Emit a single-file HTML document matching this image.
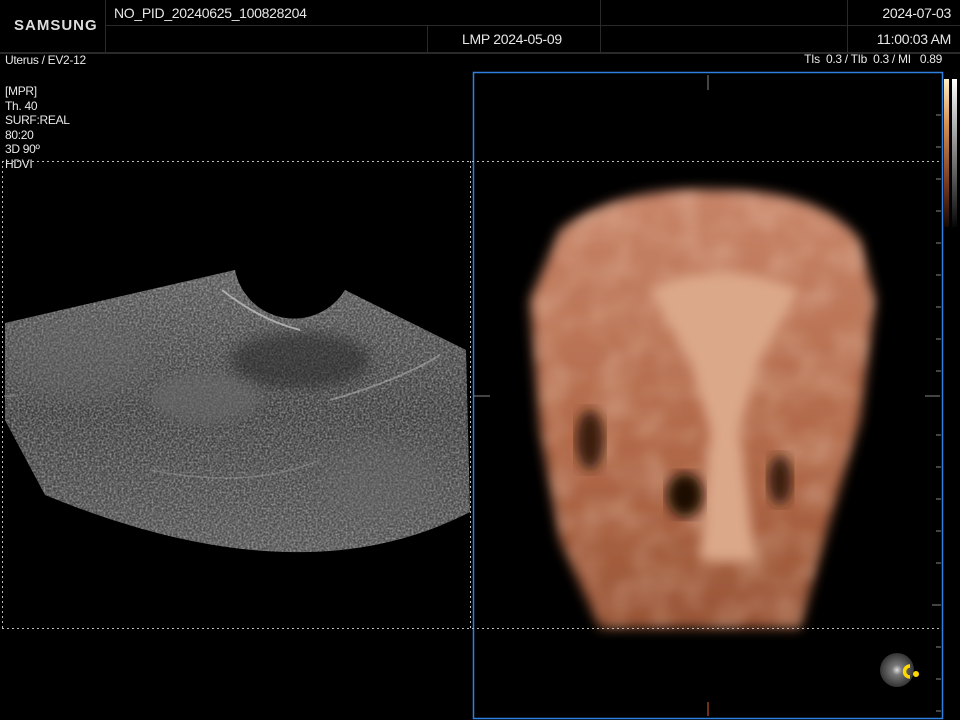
<!DOCTYPE html>
<html><head><meta charset="utf-8"><style>
body{margin:0;width:960px;height:720px;background:#000;overflow:hidden;position:relative;font-family:"Liberation Sans Narrow","Liberation Sans",sans-serif;color:#e8e8e8}
.t{position:absolute;font-size:13px;white-space:nowrap;letter-spacing:-0.3px}
.h{position:absolute;background:#2a2a2a}
</style></head><body>
<div class="h" style="top:25px;width:855px;height:1px;left:105px"></div>
<div class="h" style="left:0;top:52px;width:960px;height:2px"></div>
<div class="h" style="left:105px;top:0;width:1px;height:52px"></div>
<div class="h" style="left:427px;top:26px;width:1px;height:26px"></div>
<div class="h" style="left:600px;top:0;width:1px;height:52px"></div>
<div class="h" style="left:847px;top:0;width:1px;height:52px"></div>
<div class="t" style="left:14px;top:17px;font-weight:bold;font-size:15px;letter-spacing:1px;color:#ddd">SAMSUNG</div>
<div class="t" style="left:114px;top:5px;font-size:14px">NO_PID_20240625_100828204</div>
<div class="t" style="left:462px;top:31px;font-size:14px">LMP 2024-05-09</div>
<div class="t" style="right:9px;top:5px;font-size:14px">2024-07-03</div>
<div class="t" style="right:9px;top:31px;font-size:14px">11:00:03 AM</div>
<div class="t" style="left:5px;top:53px;font-size:12px">Uterus / EV2-12</div>
<div class="t" style="right:18px;top:52px;font-size:12px">TIs&nbsp; 0.3 / TIb&nbsp; 0.3 / MI&nbsp;&nbsp; 0.89</div>
<div class="t" style="left:5px;top:84px;font-size:12px;line-height:14.5px">[MPR]<br>Th. 40<br>SURF:REAL<br>80:20<br>3D 90º<br>HDVI</div>
<svg width="960" height="720" style="position:absolute;left:0;top:0">
<defs>
<filter id="n"><feTurbulence type="fractalNoise" baseFrequency="0.5" numOctaves="3"/><feColorMatrix values="0 0 0 0 0.75 0 0 0 0 0.75 0 0 0 0 0.75 0 0 0 1.4 -0.45"/><feComposite in2="SourceGraphic" operator="in"/></filter>
<filter id="n2"><feTurbulence type="fractalNoise" baseFrequency="0.03" numOctaves="2"/><feColorMatrix values="0 0 0 0 0.9 0 0 0 0 0.7 0 0 0 0 0.55 0 0 0 1.6 -0.6"/><feComposite in2="SourceGraphic" operator="in"/><feGaussianBlur stdDeviation="4"/></filter>
<filter id="b"><feGaussianBlur stdDeviation="6"/></filter>
<filter id="b2"><feGaussianBlur stdDeviation="14"/></filter>
<linearGradient id="g" x1="0" y1="0" x2="0" y2="1"><stop offset="0" stop-color="#555"/><stop offset="0.5" stop-color="#3a3a3a"/><stop offset="1" stop-color="#505050"/></linearGradient>
<linearGradient id="bl" x1="0" y1="0" x2="0" y2="1"><stop offset="0" stop-color="#c88468"/><stop offset="0.6" stop-color="#b06848"/><stop offset="1" stop-color="#9a5638"/></linearGradient>
<linearGradient id="cb" x1="0" y1="0" x2="0" y2="1"><stop offset="0" stop-color="#fff0c0"/><stop offset="0.3" stop-color="#d89050"/><stop offset="0.7" stop-color="#7a3a20"/><stop offset="1" stop-color="#150800"/></linearGradient>
<linearGradient id="gb" x1="0" y1="0" x2="0" y2="1"><stop offset="0" stop-color="#fff"/><stop offset="1" stop-color="#050505"/></linearGradient>
<radialGradient id="ball"><stop offset="0" stop-color="#ddd"/><stop offset="0.3" stop-color="#777"/><stop offset="1" stop-color="#333"/></radialGradient>
<clipPath id="fc"><path d="M235,270 A60,60 0 0 0 345,290 L466,350 L470,512 Q300,600 45,495 L5,420 L5,323 Z"/></clipPath>
</defs>
<path d="M235,270 A60,60 0 0 0 345,290 L466,350 L470,512 Q300,600 45,495 L5,420 L5,323 Z" fill="url(#g)"/>
<path d="M235,270 A60,60 0 0 0 345,290 L466,350 L470,512 Q300,600 45,495 L5,420 L5,323 Z" fill="#fff" filter="url(#n)" opacity="0.7"/>
<g clip-path="url(#fc)">
<ellipse cx="205" cy="398" rx="55" ry="25" fill="#6a6a6a" opacity="0.6" filter="url(#b)"/>
<ellipse cx="300" cy="360" rx="70" ry="28" fill="#222" opacity="0.5" filter="url(#b)"/>
<ellipse cx="80" cy="360" rx="70" ry="40" fill="#6a6a6a" opacity="0.4" filter="url(#b2)"/>
<ellipse cx="380" cy="480" rx="60" ry="40" fill="#6a6a6a" opacity="0.4" filter="url(#b2)"/>
</g>
<path d="M222,290 Q260,320 300,330" stroke="#ccc" stroke-width="2" fill="none" opacity="0.7"/>
<path d="M330,400 Q400,380 440,355" stroke="#bbb" stroke-width="2" fill="none" opacity="0.5"/>
<path d="M150,470 Q250,490 320,460" stroke="#aaa" stroke-width="1.5" fill="none" opacity="0.4"/>
<g>
<path d="M560,230 Q620,185 720,190 Q820,190 860,240 L875,300 L860,420 L830,520 L800,628 L600,628 L560,540 L540,430 L530,300 Z" fill="url(#bl)" filter="url(#b)"/>
<path d="M560,230 Q620,185 720,190 Q820,190 860,240 L875,300 L860,420 L830,520 L800,628 L600,628 L560,540 L540,430 L530,300 Z" fill="#fff" filter="url(#n2)" opacity="0.4"/>
<path d="M650,290 Q720,255 800,290 L760,360 L740,430 L755,560 L700,560 L710,430 L690,360 Z" fill="#dca88a" filter="url(#b)"/>
<ellipse cx="685" cy="495" rx="18" ry="22" fill="#1a0a05" filter="url(#b)"/>
<ellipse cx="590" cy="440" rx="14" ry="30" fill="#3a1a10" filter="url(#b)"/>
<ellipse cx="780" cy="480" rx="12" ry="25" fill="#3a1a10" filter="url(#b)"/>
</g>
<rect x="473.5" y="72.5" width="469" height="646" fill="none" stroke="#2f7fe0" stroke-width="1.5"/>
<line x1="2" y1="161.5" x2="942" y2="161.5" stroke="#bbb" stroke-dasharray="2,3"/>
<line x1="2" y1="628.5" x2="942" y2="628.5" stroke="#bbb" stroke-dasharray="2,3"/>
<line x1="2.5" y1="161" x2="2.5" y2="628" stroke="#bbb" stroke-dasharray="2,3"/>
<line x1="470.5" y1="161" x2="470.5" y2="628" stroke="#bbb" stroke-dasharray="2,3"/>
<line x1="708" y1="75" x2="708" y2="90" stroke="#888"/>
<line x1="708" y1="702" x2="708" y2="716" stroke="#e06030"/>
<line x1="4" y1="396" x2="18" y2="396" stroke="#888"/>
<line x1="474" y1="396" x2="490" y2="396" stroke="#888"/>
<line x1="925" y1="396" x2="940" y2="396" stroke="#888"/>
<g stroke="#888">
<line x1="936" y1="115" x2="941" y2="115"/><line x1="936" y1="147" x2="941" y2="147"/><line x1="936" y1="179" x2="941" y2="179"/><line x1="936" y1="211" x2="941" y2="211"/><line x1="936" y1="243" x2="941" y2="243"/><line x1="936" y1="275" x2="941" y2="275"/><line x1="936" y1="307" x2="941" y2="307"/><line x1="936" y1="339" x2="941" y2="339"/><line x1="936" y1="371" x2="941" y2="371"/><line x1="936" y1="435" x2="941" y2="435"/><line x1="936" y1="467" x2="941" y2="467"/><line x1="936" y1="499" x2="941" y2="499"/><line x1="936" y1="531" x2="941" y2="531"/><line x1="936" y1="563" x2="941" y2="563"/><line x1="932" y1="605" x2="941" y2="605"/><line x1="936" y1="647" x2="941" y2="647"/><line x1="936" y1="679" x2="941" y2="679"/><line x1="936" y1="711" x2="941" y2="711"/>
</g>
<rect x="944" y="79" width="5" height="148" fill="url(#cb)"/>
<rect x="952" y="79" width="5" height="148" fill="url(#gb)"/>
<circle cx="897" cy="670" r="17" fill="url(#ball)"/>
<path d="M910,666 A5,5 0 1 0 910,677" stroke="#ffd800" stroke-width="3.5" fill="none"/>
<circle cx="916" cy="674" r="3" fill="#ffd800"/>
</svg>
</body></html>
